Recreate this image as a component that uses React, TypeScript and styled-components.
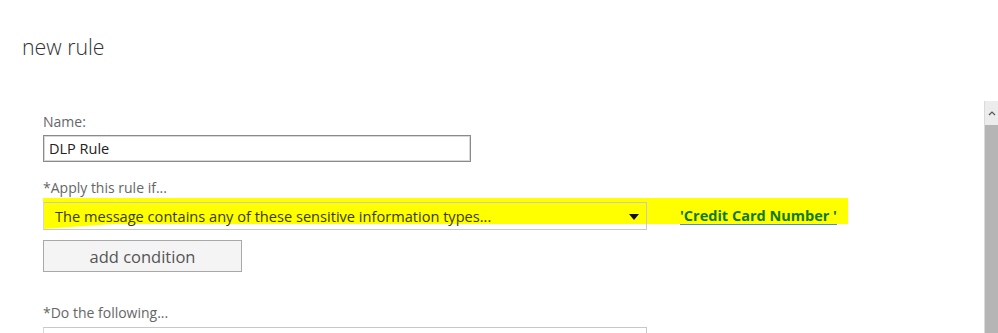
import React from "react";
import styled, { createGlobalStyle } from "styled-components";

const GlobalStyle = createGlobalStyle`
  html, body {
    margin: 0;
    padding: 0;
    background: #fff;
    overflow: hidden;
  }
  body {
    font-family: "Open Sans", "Noto Sans", sans-serif;
  }
`;

const Page = styled.div`
  width: 998px;
  height: 333px;
  overflow: hidden;
  display: flex;
  flex-direction: column;
`;

const Title = styled.h1`
  margin: 0;
  height: 101px;
  padding: 32px 0 0 22px;
  box-sizing: border-box;
  font-size: 21.3px;
  font-weight: 300;
  color: #333;
`;

const Body = styled.div`
  flex: 1;
  display: flex;
  min-height: 0;
`;

const Form = styled.div`
  flex: 1;
  padding: 12px 0 0 43px;
  display: flex;
  flex-direction: column;
`;

const Label = styled.div<{ $top?: number }>`
  font-size: 14px;
  color: #666;
  line-height: 18px;
  margin-top: ${(p) => p.$top ?? 0}px;
`;

const TextInput = styled.div`
  margin-top: 4px;
  width: 428px;
  height: 27px;
  box-sizing: border-box;
  border: 1px solid #8a8a8a;
  box-shadow: inset 0 0 0 1px #d8d8d8;
  padding: 0 5px;
  font-size: 14.5px;
  line-height: 25px;
  color: #222;
`;

const MarkerRow = styled.div`
  position: relative;
  margin-top: 1px;
  width: 805px;
  height: 26px;
  background: #ffff00;
  display: flex;
  align-items: flex-start;
  flex-shrink: 0;

  &::after {
    content: "";
    position: absolute;
    left: 0;
    top: 26px;
    width: 70px;
    height: 5px;
    background: #ffff00;
    clip-path: polygon(0 0, 100% 0, 0 100%);
  }
`;

const Select = styled.div<{ $open?: boolean }>`
  position: relative;
  z-index: 1;
  margin-top: 4px;
  width: 604px;
  height: 28px;
  box-sizing: border-box;
  border: 1px solid #c8c8c8;
  border-left-color: #d8d8d8;
  padding: 0 7px 0 11px;
  display: flex;
  align-items: center;
  justify-content: space-between;
  font-size: 14.6px;
  color: ${(p) => (p.$open ? "#3b3b00" : "#444")};
  flex-shrink: 0;
`;

const Caret = styled.span`
  width: 0;
  height: 0;
  border-left: 5px solid transparent;
  border-right: 5px solid transparent;
  border-top: 6px solid #111;
  margin-top: 2px;
`;

const RuleLink = styled.a`
  margin: 8px 0 0 33px;
  font-size: 14.5px;
  font-weight: 700;
  color: #0f7a0f;
  text-decoration: underline;
  text-decoration-color: #4a8fd6;
  text-underline-offset: 3px;
  white-space: pre;
  cursor: pointer;
`;

const Button = styled.button`
  margin-top: 16px;
  width: 199px;
  height: 32px;
  flex-shrink: 0;
  box-sizing: border-box;
  background: #f4f4f4;
  border: 1px solid #a8a8a8;
  font-family: "Open Sans", "Noto Sans", sans-serif;
  font-size: 16.5px;
  color: #555;
  padding: 0;
`;

const PlainRow = styled.div`
  margin-top: 1px;
  display: flex;
  align-items: flex-start;
  flex-shrink: 0;
`;

const PartialText = styled.span`
  margin: 6px 0 0 70px;
  font-size: 14px;
  color: #444;
`;

const Scrollbar = styled.div`
  width: 13px;
  display: flex;
  flex-direction: column;
  border-left: 1px solid #dadada;
`;

const ScrollArrow = styled.div`
  height: 24px;
  background: #ececec;
  display: flex;
  align-items: center;
  justify-content: center;
`;

const ScrollThumb = styled.div`
  flex: 1;
  background: #b5b5b5;
`;

export default function App() {
  return (
    <>
      <GlobalStyle />
      <Page>
        <Title>new rule</Title>
        <Body>
          <Form>
            <Label>Name:</Label>
            <TextInput>DLP Rule</TextInput>
            <Label $top={17}>*Apply this rule if...</Label>
            <MarkerRow>
              <Select $open>
                <span>The message contains any of these sensitive information types...</span>
                <Caret />
              </Select>
              <RuleLink>'Credit Card Number '</RuleLink>
            </MarkerRow>
            <Button>add condition</Button>
            <Label $top={32}>*Do the following...</Label>
            <PlainRow>
              <Select />
              <PartialText>add block message</PartialText>
            </PlainRow>
          </Form>
          <Scrollbar>
            <ScrollArrow>
              <svg width="8" height="6" viewBox="0 0 8 6">
                <path d="M1 5 L4 2 L7 5" fill="none" stroke="#555" strokeWidth="1.2" />
              </svg>
            </ScrollArrow>
            <ScrollThumb />
          </Scrollbar>
        </Body>
      </Page>
    </>
  );
}
